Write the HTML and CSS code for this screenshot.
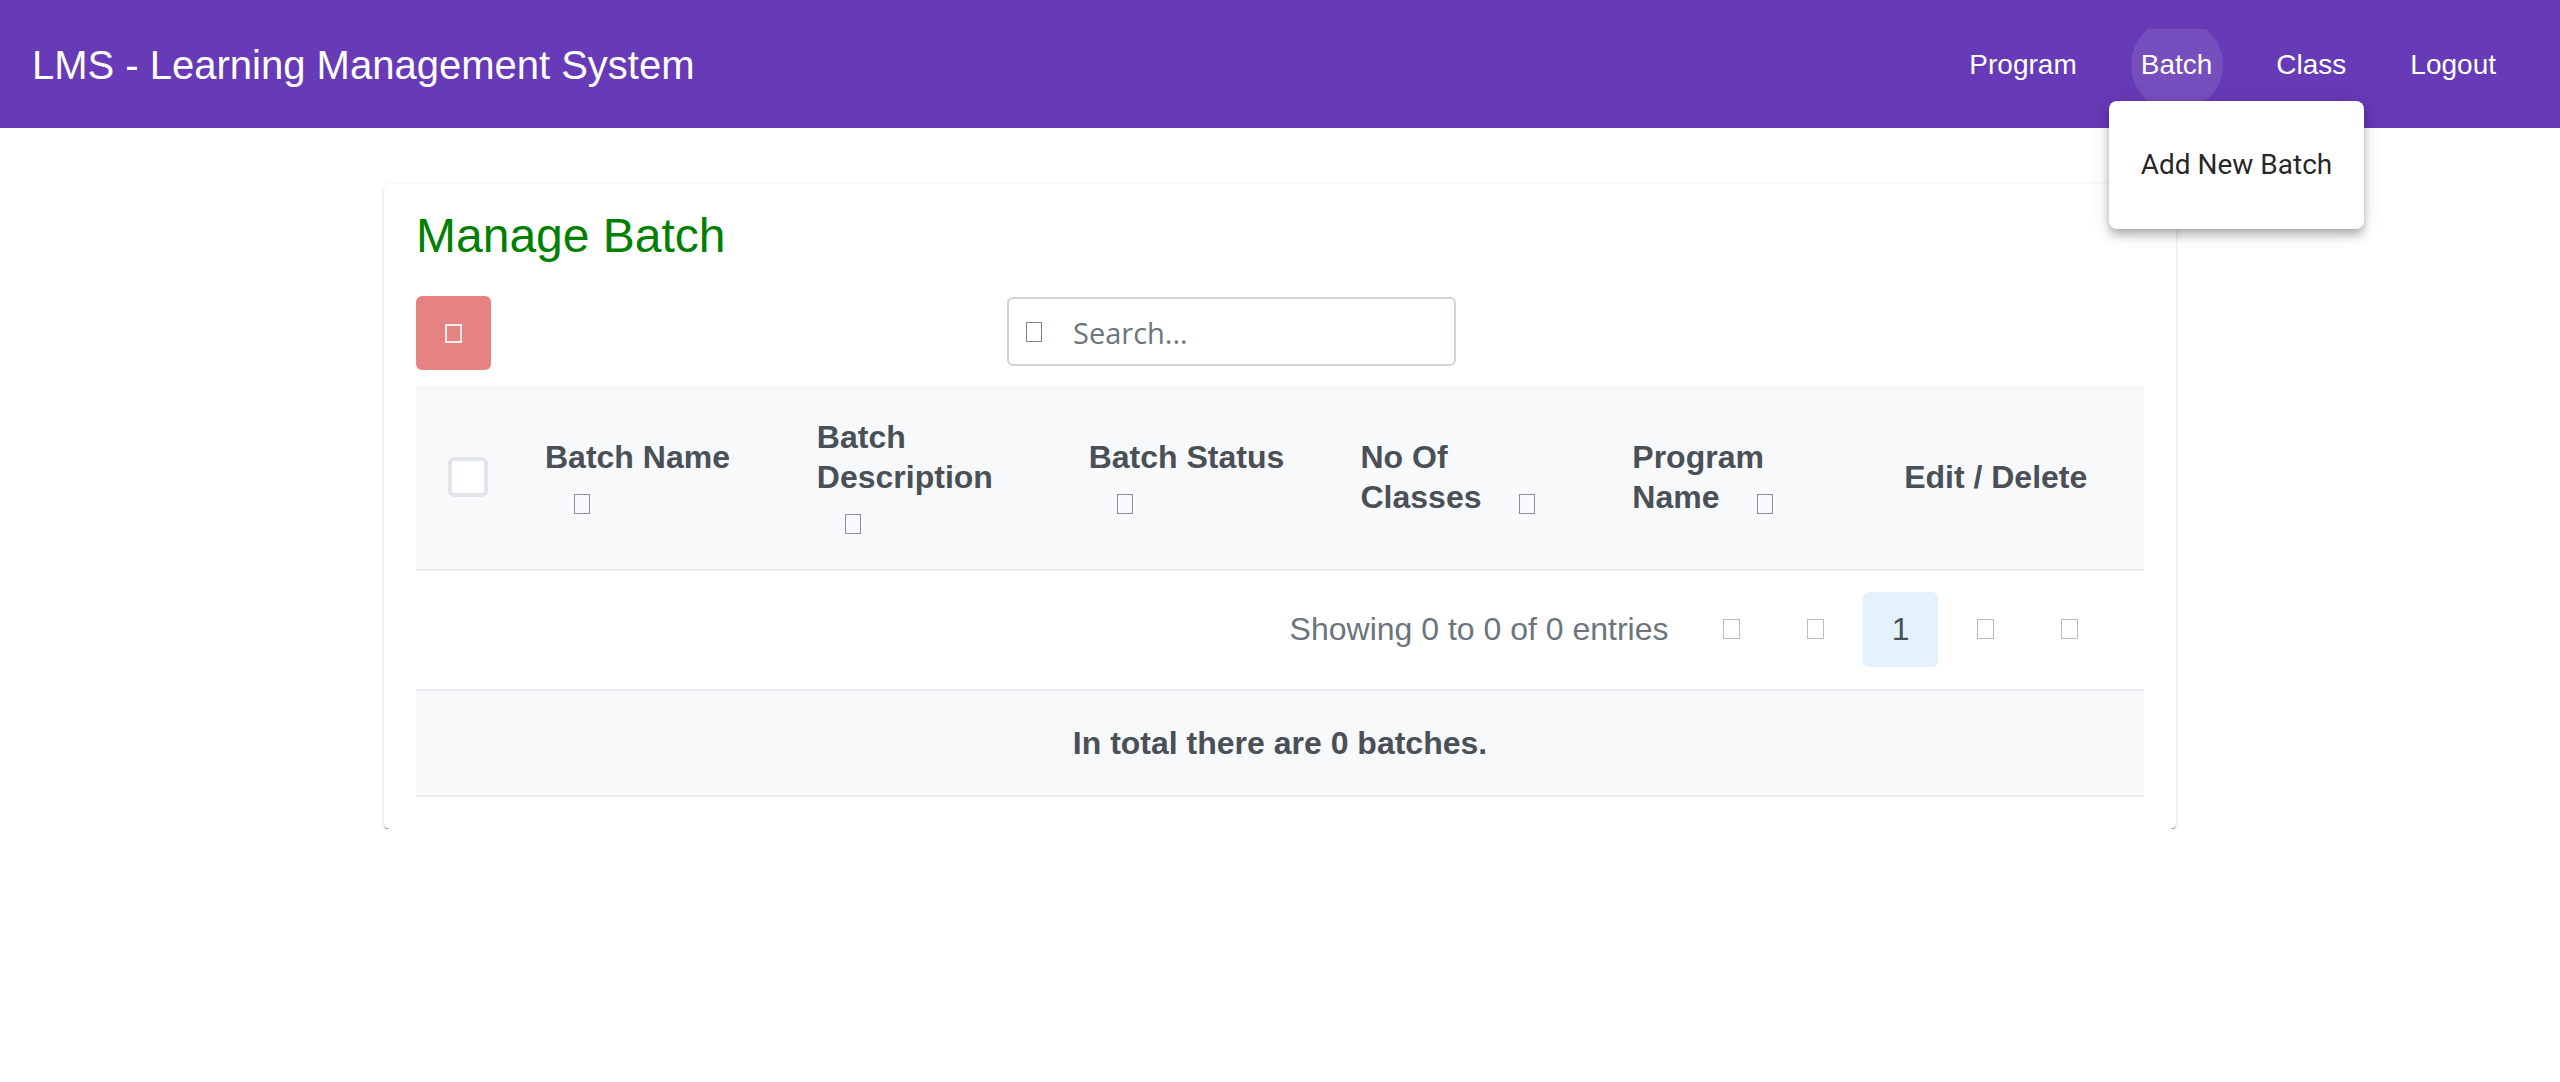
FILE: index.html
```html
<!DOCTYPE html>
<html lang="en">
<head>
<meta charset="utf-8">
<title>LMS - Manage Batch</title>
<link rel="stylesheet" href="styles.css">
</head>
<body>
<header class="navbar">
  <span class="brand">LMS - Learning Management System</span>
  <nav class="nav">
    <button class="nav-btn">Program</button>
    <div class="nav-item">
      <button class="nav-btn"><span class="ripple"></span><span class="nav-label">Batch</span></button>
      <div class="menu">
        <div class="menu-item">Add New Batch</div>
      </div>
    </div>
    <button class="nav-btn">Class</button>
    <button class="nav-btn">Logout</button>
  </nav>
</header>

<main class="card">
  <h2 class="card-title">Manage Batch</h2>
  <div class="toolbar">
    <button class="btn-danger"><span class="tofu tofu-white"></span></button>
    <div class="search">
      <span class="tofu tofu-search"></span>
      <span class="placeholder">Search...</span>
    </div>
  </div>

  <table class="grid">
    <colgroup>
      <col class="col-check">
      <col><col><col><col><col><col>
    </colgroup>
    <thead>
      <tr>
        <th class="th-check"><span class="checkbox"></span></th>
        <th>Batch Name <span class="sort"><span class="tofu tofu-sort"></span></span></th>
        <th>Batch Description <span class="sort"><span class="tofu tofu-sort"></span></span></th>
        <th>Batch Status <span class="sort"><span class="tofu tofu-sort"></span></span></th>
        <th>No Of Classes <span class="sort"><span class="tofu tofu-sort"></span></span></th>
        <th>Program Name <span class="sort"><span class="tofu tofu-sort"></span></span></th>
        <th>Edit / Delete</th>
      </tr>
    </thead>
  </table>

  <div class="paginator">
    <span class="current">Showing 0 to 0 of 0 entries</span>
    <span class="pg-btn"><span class="tofu tofu-pg"></span></span>
    <span class="pg-btn"><span class="tofu tofu-pg"></span></span>
    <span class="pg-btn pg-active">1</span>
    <span class="pg-btn"><span class="tofu tofu-pg"></span></span>
    <span class="pg-btn"><span class="tofu tofu-pg"></span></span>
  </div>

  <div class="table-footer">In total there are 0 batches.</div>
</main>
</body>
</html>
```

FILE: styles.css
```css
* { box-sizing: border-box; }

body {
  margin: 0;
  background: #ffffff;
  font-family: "Liberation Sans", Arial, sans-serif;
}

/* ---------- navbar ---------- */
.navbar {
  height: 128px;
  background: #673ab7;
  color: #ffffff;
  display: flex;
  align-items: center;
  padding: 2px 32px 0;
}
.brand {
  font-size: 40px;
  line-height: 48px;
  font-weight: 400;
  flex: 1;
}
.nav {
  display: flex;
  align-items: center;
}
.nav-item {
  position: relative;
}
.nav-btn {
  position: relative;
  overflow: hidden;
  height: 72px;
  padding: 0 32px;
  border: 0;
  border-radius: 8px;
  background: transparent;
  color: #ffffff;
  font-family: "Liberation Sans", Arial, sans-serif;
  font-size: 28px;
  line-height: 72px;
  cursor: pointer;
  display: block;
}
.ripple {
  position: absolute;
  width: 92px;
  height: 92px;
  left: 50%;
  top: 50%;
  margin-left: -46px;
  margin-top: -46px;
  border-radius: 50%;
  background: rgba(255, 255, 255, 0.1);
}
.nav-label {
  position: relative;
}
.menu {
  position: absolute;
  top: 72px;
  left: 0;
  z-index: 10;
  background: #ffffff;
  border-radius: 8px;
  padding: 16px 0;
  box-shadow: 0 4px 8px -2px rgba(0,0,0,.2), 0 8px 10px 0 rgba(0,0,0,.14), 0 2px 20px 0 rgba(0,0,0,.12);
}
.menu-item {
  height: 96px;
  line-height: 96px;
  padding: 0 32px;
  font-family: Roboto, "Liberation Sans", sans-serif;
  font-size: 28px;
  color: rgba(0, 0, 0, 0.87);
  white-space: nowrap;
}

/* ---------- card ---------- */
.card {
  width: 1792px;
  margin: 56px auto 0;
  background: #ffffff;
  border-radius: 6px;
  padding: 24px 32px 32px;
  box-shadow: 0 3px 1px -1px rgba(0,0,0,.38), 0 2px 2px 0 rgba(0,0,0,.12), 0 1px 6px 0 rgba(0,0,0,.08);
}
.card-title {
  margin: 0 0 33px;
  font-size: 48px;
  line-height: 55px;
  font-weight: 400;
  color: #008000;
}

/* ---------- toolbar ---------- */
.toolbar {
  display: flex;
  align-items: flex-start;
  margin-bottom: 15px;
}
.btn-danger {
  width: 75px;
  height: 74px;
  border: 0;
  border-radius: 6px;
  background: #e58282;
  display: flex;
  align-items: center;
  justify-content: center;
  padding: 0;
}
.search {
  margin-left: 516px;
  margin-top: 1px;
  width: 449px;
  height: 69px;
  border: 2px solid #ced4da;
  border-radius: 6px;
  display: flex;
  align-items: center;
  padding-left: 17px;
}
.placeholder {
  margin-left: 31px;
  margin-top: 2px;
  font-family: "Open Sans", "Liberation Sans", sans-serif;
  font-size: 29px;
  color: #6c757d;
}

/* ---------- tofu glyphs (missing icon font) ---------- */
.tofu {
  display: inline-block;
  box-sizing: border-box;
  vertical-align: middle;
}
.tofu-white {
  width: 17px;
  height: 19px;
  border: 2px solid #fbeaea;
}
.tofu-search {
  width: 16px;
  height: 20px;
  border: 1.5px solid #7d858c;
}
.tofu-sort {
  width: 16px;
  height: 20px;
  border: 1.5px solid #8a9096;
}
.tofu-pg {
  width: 17px;
  height: 20px;
  border: 1.5px solid #b9bcc0;
}

/* ---------- table ---------- */
.grid {
  width: 100%;
  border-collapse: collapse;
  table-layout: fixed;
}
.col-check { width: 97px; }
.grid th {
  background: #f8f9fa;
  color: #495057;
  font-size: 32px;
  line-height: 40px;
  font-weight: 700;
  text-align: left;
  vertical-align: middle;
  padding: 32px;
  border-bottom: 2px solid #e9ecef;
}
.grid th.th-check {
  padding: 32px 25px 32px 32px;
}
.checkbox {
  display: block;
  width: 40px;
  height: 40px;
  border: 4px solid #e2e5e9;
  border-radius: 6px;
  background: #ffffff;
}
.sort {
  display: inline-block;
  width: 41px;
  margin-left: 16px;
  text-align: center;
  line-height: 40px;
}
.sort .tofu {
  vertical-align: -6px;
}

/* ---------- paginator ---------- */
.paginator {
  display: flex;
  justify-content: flex-end;
  align-items: center;
  padding: 16px 32px 17px;
}
.current {
  margin: 4.6px;
  padding: 0 16px;
  color: #6c757d;
  font-size: 32px;
  line-height: 75px;
}
.pg-btn {
  width: 75.4px;
  height: 75.4px;
  margin: 4.6px;
  border-radius: 6px;
  display: flex;
  align-items: center;
  justify-content: center;
  color: #495057;
  font-size: 32px;
}
.pg-active {
  background: #e3f2fd;
}

/* ---------- footer ---------- */
.table-footer {
  background: #f8f9fa;
  border-top: 2px solid #e9ecef;
  border-bottom: 2px solid #e9ecef;
  padding: 32px;
  text-align: center;
  color: #495057;
  font-size: 32px;
  line-height: 40px;
  font-weight: 700;
}
```
